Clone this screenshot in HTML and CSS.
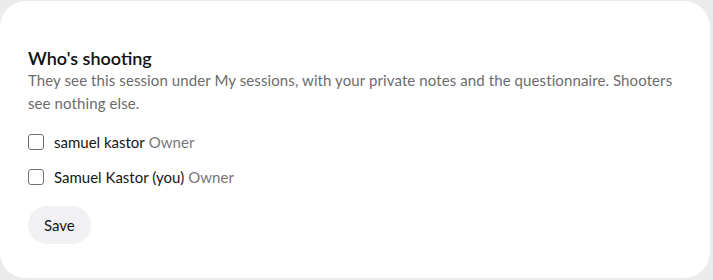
FILE: index.html
```html
<!DOCTYPE html>
<html lang="en">
    <head>
        <meta charset="UTF-8" />
        <meta name="viewport" content="width=device-width, initial-scale=1.0" />
        <title>Who's shooting</title>
        <link rel="stylesheet" href="styles.css">
    </head>
    <body>
        <div class="card">
            <h2 class="card-title">Who's shooting</h2>
            <p class="card-desc">They see this session under My sessions, with your private notes and the questionnaire. Shooters see nothing else.</p>
            <ul class="shooters">
                <li>
                    <label class="shooter">
                        <input type="checkbox" />
                        <span class="name">samuel kastor</span>
                        <span class="role">Owner</span>
                    </label>
                </li>
                <li>
                    <label class="shooter">
                        <input type="checkbox" />
                        <span class="name">Samuel Kastor (you)</span>
                        <span class="role">Owner</span>
                    </label>
                </li>
            </ul>
            <button class="btn-save">Save</button>
        </div>
    </body>
</html>
```
FILE: styles.css
```css
* {
    margin: 0;
    padding: 0;
    box-sizing: border-box;
}

body {
    background: #ebebec;
    font-family: "Lato", "Liberation Sans", sans-serif;
    color: #161616;
    padding: 1px 3px 2px 0;
}

.card {
    background: #ffffff;
    border-radius: 26px;
    height: 277px;
    padding: 46px 28px 0;
}

.card-title {
    font-size: 18px;
    font-weight: 600;
    line-height: 22px;
    color: #111111;
}

.card-desc {
    font-size: 15px;
    letter-spacing: 0.1px;
    line-height: 23px;
    color: #6c6c6c;
}

.shooters {
    list-style: none;
    margin-top: 16px;
    display: flex;
    flex-direction: column;
    gap: 13px;
}

.shooter {
    display: flex;
    align-items: center;
    height: 22px;
    font-size: 15px;
}

.shooter input {
    appearance: none;
    width: 16px;
    height: 16px;
    border: 1.5px solid #6f6f72;
    border-radius: 3px;
    margin-right: 10px;
    background: #fff;
}

.shooter .role {
    color: #76767a;
    margin-left: 4px;
}

.btn-save {
    margin-top: 18px;
    border: none;
    background: #f1f1f3;
    border-radius: 19px;
    height: 38px;
    padding: 0 16px;
    font-family: inherit;
    font-size: 15px;
    color: #161616;
}
```
